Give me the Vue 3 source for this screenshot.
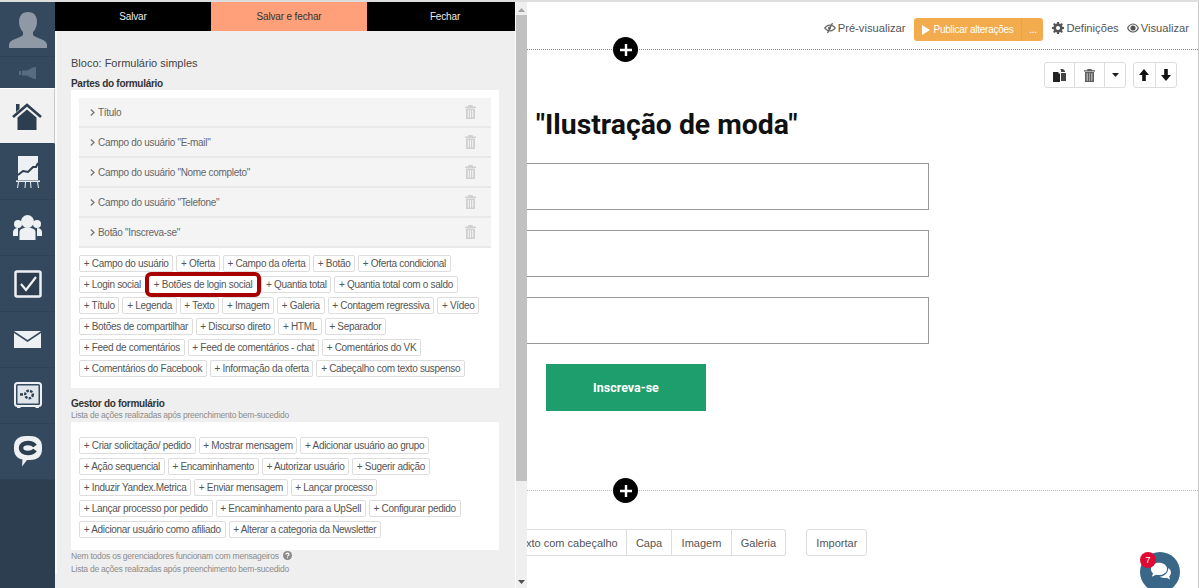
<script setup>
const navItems = ['home','chart','people','check','mail','safe','chat']
const parts = ['Título','Campo do usuário "E-mail"','Campo do usuário "Nome completo"','Campo do usuário "Telefone"','Botão "Inscreva-se"']
const partButtons = [
  ['Campo do usuário','Oferta','Campo da oferta','Botão','Oferta condicional'],
  ['Login social','Botões de login social','Quantia total','Quantia total com o saldo'],
  ['Título','Legenda','Texto','Imagem','Galeria','Contagem regressiva','Vídeo'],
  ['Botões de compartilhar','Discurso direto','HTML','Separador'],
  ['Feed de comentários','Feed de comentários - chat','Comentários do VK'],
  ['Comentários do Facebook','Informação da oferta','Cabeçalho com texto suspenso']
]
const managerButtons = [
  ['Criar solicitação/ pedido','Mostrar mensagem','Adicionar usuário ao grupo'],
  ['Ação sequencial','Encaminhamento','Autorizar usuário','Sugerir adição'],
  ['Induzir Yandex.Metrica','Enviar mensagem','Lançar processo'],
  ['Lançar processo por pedido','Encaminhamento para a UpSell','Configurar pedido'],
  ['Adicionar usuário como afiliado','Alterar a categoria da Newsletter']
]
</script>

<template>
  <div class="page">
    <aside class="sidebar">
      <div class="avatar">
        <svg width="38" height="36" viewBox="0 0 38 36"><path fill="#8f99a5" d="M19 0c6 0 9 4 9 10 0 4-2 8-4 10v3c2 3 14 4 14 10v3H0v-3c0-6 12-7 14-10v-3c-2-2-4-6-4-10C10 4 13 0 19 0z"/></svg>
      </div>
      <div class="speaker">
        <svg width="18" height="12" viewBox="0 0 18 12"><path fill="#566c82" d="M0 4h2v4H0zM3 3.500h5L15 0h2v12h-2L8 8.500H3z"/></svg>
      </div>
      <div v-for="item in navItems" :key="item" class="nav-item" :class="{ active: item === 'home' }">
        <svg v-if="item === 'home'" width="30" height="27" viewBox="0 0 30 27"><path fill="none" stroke="#2c3e50" stroke-width="2.600" d="M1 14 15 2l14 12"/><path fill="#2c3e50" d="M4 1h3.500v5L4 9zM15 6.500l9.500 8V27h-19V14.500z"/></svg>
        <svg v-else-if="item === 'chart'" width="24" height="32" viewBox="0 0 24 32"><path fill="#eef1f3" d="M2 0h20v24H2z"/><path fill="#eef1f3" d="M0 24.500h24V26h-2l1 6h-1l-1-6H15l.5 6h-1L14 26H10l-.5 6h-1L9 26H3l-1 6H1l1-6H0z"/><path fill="none" stroke="#2c3e50" stroke-width="2" d="M2 19l5-4 5 1 5-5 3 0 2-4"/></svg>
        <svg v-else-if="item === 'people'" width="29" height="25" viewBox="0 0 29 25"><g fill="#eef1f3"><circle cx="14.500" cy="6.500" r="6.500"/><circle cx="5" cy="9" r="4"/><circle cx="24" cy="9" r="4"/><path d="M6.500 25v-8c0-3 4-4.500 8-4.500s8 1.500 8 4.500v8z"/><path d="M0 21v-4c0-2 2-4 5-4v8zM29 21v-4c0-2-2-4-5-4v8z"/></g></svg>
        <svg v-else-if="item === 'check'" width="28" height="28" viewBox="0 0 28 28"><rect x="1.500" y="1.500" width="25" height="25" rx="1.500" fill="#2c3e50" stroke="#eef1f3" stroke-width="2.500"/><path fill="none" stroke="#eef1f3" stroke-width="2.200" d="M7 14l5 6L22 7"/></svg>
        <svg v-else-if="item === 'mail'" width="27" height="17" viewBox="0 0 27 17"><path fill="#eef1f3" d="M0 0h27L13.500 9zM0 2l13.500 9L27 2v15H0z"/></svg>
        <svg v-else-if="item === 'safe'" width="28" height="27" viewBox="0 0 28 27"><rect x="1" y="1" width="26" height="23" rx="2.500" fill="#34495e" stroke="#eef1f3" stroke-width="2"/><rect x="3.500" y="3.500" width="21" height="18" fill="#dfe5ea"/><circle cx="15" cy="12.500" r="3.800" fill="none" stroke="#2c3e50" stroke-width="2.400" stroke-dasharray="2.500 1.200"/><path fill="#2c3e50" d="M6 11.200h3v2.500H6z"/><path fill="#eef1f3" d="M3 24h3.500v2H3zM21.500 24H25v2h-3.500z"/></svg>
        <svg v-else width="28" height="31" viewBox="0 0 28 31"><path fill="#eef1f3" d="M12 0h4c8 0 12 4 12 11v2c0 7-4 11-12 11h-3l-5 6.500L8.500 23.500C3 22.500 0 18.500 0 13v-2C0 4 4 0 12 0z"/><path fill="none" stroke="#2c3e50" stroke-width="4.500" d="M21 10c-1.500-2-4-3-7-3-4 0-7 2-7 5s3 5 7 5c3 0 5.500-1 7-3"/></svg>
      </div>
    </aside>

    <section class="panel">
      <div class="panel-body">
        <div class="tabs">
          <div class="tab">Salvar</div>
          <div class="tab tab-main">Salvar e fechar</div>
          <div class="tab tab-close">Fechar</div>
        </div>
        <div class="panel-content">
          <div class="block-title">Bloco: Formulário simples</div>
          <div class="section-title">Partes do formulário</div>
          <div class="white-box parts-box">
            <div v-for="p in parts" :key="p" class="part-row">
              <span class="chev">
                <svg width="5" height="7" viewBox="0 0 5 7"><path fill="none" stroke="#777" stroke-width="1.300" d="M.8.500 4 3.500.8 6.500"/></svg>
              </span>
              <span class="part-name">{{ p }}</span>
              <svg class="part-trash" width="11" height="14" viewBox="0 0 11 14"><path fill="#d0d0d0" d="M3.500 0h4l.5 1.500h3V3H0V1.500h3zM1 3.500h9V14H1zM2.800 5v7.500h1V5zm2.200 0v7.500h1V5zm2.200 0v7.500h1V5z" fill-rule="evenodd"/></svg>
            </div>
            <div class="tag-rows">
              <div v-for="(row, i) in partButtons" :key="i" class="tag-row">
                <span v-for="b in row" :key="b" class="tag" :class="{ marked: b === 'Botões de login social' }">+ {{ b }}</span>
              </div>
            </div>
          </div>
          <div class="section-title manager-title">Gestor do formulário</div>
          <div class="hint hint-top">Lista de ações realizadas após preenchimento bem-sucedido</div>
          <div class="white-box manager-box">
            <div class="tag-rows">
              <div v-for="(row, i) in managerButtons" :key="i" class="tag-row">
                <span v-for="b in row" :key="b" class="tag">+ {{ b }}</span>
              </div>
            </div>
          </div>
          <div class="hint note">Nem todos os gerenciadores funcionam com mensageiros
            <svg width="9" height="9" viewBox="0 0 9 9"><circle cx="4.500" cy="4.500" r="4.500" fill="#8a8a8a"/><path fill="none" stroke="#fff" stroke-width="1.200" d="M3 3.500c0-1.800 3-1.800 3 0 0 1-1.500 1-1.500 2"/><path fill="#fff" d="M4 6.300h1v1H4z"/></svg>
          </div>
          <div class="hint note2">Lista de ações realizadas após preenchimento bem-sucedido</div>
        </div>
      </div>
      <div class="scrollbar">
        <svg class="arrow-up" width="7" height="4" viewBox="0 0 7 4"><path fill="#a3a3a3" d="M3.500 0 7 4H0z"/></svg>
        <div class="thumb"></div>
        <svg class="arrow-down" width="7" height="4" viewBox="0 0 7 4"><path fill="#505050" d="M0 0h7L3.500 4z"/></svg>
      </div>
    </section>

    <main class="canvas">
      <div class="topbar">
        <span class="top-link">
          <svg width="12" height="10" viewBox="0 0 12 10"><path fill="#666" d="M6 1.500C9 1.500 11 3.500 12 5c-1 1.500-3 3.500-6 3.500S1 6.500 0 5c1-1.500 3-3.500 6-3.500zm0 1.200C4 2.700 2.500 3.800 1.500 5 2.500 6.200 4 7.300 6 7.300S9.500 6.200 10.500 5C9.500 3.800 8 2.700 6 2.700z" fill-rule="evenodd"/><path stroke="#666" stroke-width="1.300" d="M8.500 0 3.500 10"/><circle cx="5.500" cy="5" r="1.500" fill="#666"/></svg>
          Pré-visualizar
        </span>
        <div class="publish">
          <span class="publish-main">
            <svg width="8" height="10" viewBox="0 0 8 10"><path fill="#fff" d="M0 0l8 5-8 5z"/></svg>
            Publicar alterações
          </span>
          <span class="publish-more">...</span>
        </div>
        <span class="top-link">
          <svg width="12" height="12" viewBox="0 0 12 12"><path fill="#555" fill-rule="evenodd" d="M5 0h2l.3 1.700 1 .4L9.800 1.100l1.100 1.100-1 1.500.4 1L12 5v2l-1.700.3-.4 1 1 1.500-1.100 1.100-1.500-1-1 .4L7 12H5l-.3-1.700-1-.4-1.500 1-1.100-1.100 1-1.500-.4-1L0 7V5l1.700-.3.400-1-1-1.500 1.100-1.100 1.500 1 1-.4zM6 4a2 2 0 1 0 0 4 2 2 0 0 0 0-4z"/></svg>
          Definições
        </span>
        <span class="top-link">
          <svg width="12" height="10" viewBox="0 0 13 10"><path fill="#555" fill-rule="evenodd" d="M6.500 0C9.800 0 12 2.500 13 5c-1 2.500-3.200 5-6.500 5S1 7.500 0 5c1-2.500 3.200-5 6.500-5zm0 1.200C4 1.200 2.300 3 1.400 5c.9 2 2.600 3.800 5.100 3.800S10.700 7 11.600 5C10.700 3 9 1.200 6.500 1.200zm0 1a2.800 2.800 0 1 1 0 5.600 2.800 2.800 0 0 1 0-5.600z"/></svg>
          Visualizar
        </span>
      </div>
      <div class="divider">
        <span class="plus"><svg width="12" height="12" viewBox="0 0 12 12"><path stroke="#fff" stroke-width="2.400" d="M6 0v12M0 6h12"/></svg></span>
      </div>
      <div class="block-tools">
        <div class="btn-group">
          <span class="tool tool-wide">
            <svg width="13" height="13" viewBox="0 0 13 13"><path fill="#222" d="M0 3h6l1 1v9H0z"/><path fill="#444" d="M7 0h3l2 2v1H8V1zM8 4h5v8H8z"/><path fill="#fff" d="M5.500 2.500h1.500v2H5.500z"/></svg>
          </span>
          <span class="tool tool-wide">
            <svg width="11" height="13" viewBox="0 0 11 13"><path fill="#5f5f5f" fill-rule="evenodd" d="M3.500 0h4L8 1.200h3v1.300H0V1.200h3zM1 3h9v10H1zM2.800 4.500v7h1v-7zm2.200 0v7h1v-7zm2.200 0v7h1v-7z"/><path fill="#a89a9a" d="M2.800 4.500h1v7h-1zM5 4.500h1v7H5zM7.200 4.500h1v7h-1z"/></svg>
          </span>
          <span class="tool tool-caret"><svg width="7" height="4" viewBox="0 0 7 4"><path fill="#222" d="M0 0h7L3.500 4z"/></svg></span>
        </div>
        <div class="btn-group">
          <span class="tool tool-arrow"><svg width="10" height="12" viewBox="0 0 10 12"><path fill="#111" d="M5 0l5 6H6.800v6H3.200V6H0z"/></svg></span>
          <span class="tool tool-arrow"><svg width="10" height="12" viewBox="0 0 10 12"><path fill="#111" d="M3.200 0h3.600v6H10l-5 6-5-6h3.200z"/></svg></span>
        </div>
      </div>
      <h1 class="headline">"Ilustração de moda"</h1>
      <div class="fields">
        <div class="field"></div>
        <div class="field"></div>
        <div class="field"></div>
      </div>
      <div class="submit">Inscreva-se</div>
      <div class="divider divider-bottom">
        <span class="plus"><svg width="12" height="12" viewBox="0 0 12 12"><path stroke="#fff" stroke-width="2.400" d="M6 0v12M0 6h12"/></svg></span>
      </div>
      <div class="add-row">
        <div class="add-group">
          <span class="add-btn add-first">xto com cabeçalho</span>
          <span class="add-btn">Capa</span>
          <span class="add-btn">Imagem</span>
          <span class="add-btn">Galeria</span>
        </div>
        <span class="import">Importar</span>
      </div>
      <div class="chat-bubble">
        <svg width="23" height="20" viewBox="0 0 26 23"><path fill="#fff" d="M11 1c5.500 0 9.500 3 9.500 7s-4 7-9.500 7c-1 0-2 0-3-.3L3 17l1.500-4C3 11.700 2 10 2 8c0-4 4-7 9-7z"/><path fill="#fff" d="M22 7c2 1.500 3 3 3 5 0 2-1 3.500-2 4.500l1 3.500-4-2c-3 1-6 0-8-1 5 0 10-4 10-10z"/></svg>
        <span class="badge">7</span>
      </div>
    </main>
  </div>
</template>

<style>
html, body { margin: 0; padding: 0; background: #fff; overflow: hidden; }
</style>

<style scoped>
.page {
  width: 1199px;
  height: 588px;
  box-sizing: border-box;
  border-top: 2px solid #dedede;
  display: flex;
  overflow: hidden;
  position: relative;
  font-family: "Liberation Sans", Arial, sans-serif;
  background: #fff;
}
.sidebar {
  width: 55px;
  flex: none;
  background: #2c3e50;
  display: flex;
  flex-direction: column;
}
.avatar {
  height: 55px;
  background: #34495e;
  border-bottom: 1px solid #2f4256;
  box-sizing: border-box;
  display: flex;
  align-items: flex-end;
  justify-content: center;
  padding-bottom: 8px;
}
.speaker {
  height: 31px;
  background: #34495e;
  display: flex;
  align-items: center;
  justify-content: center;
}
.nav-item {
  height: 56px;
  flex: none;
  box-sizing: border-box;
  background: #34495e;
  border-bottom: 1px solid #2f4256;
  display: flex;
  align-items: center;
  justify-content: center;
}
.nav-item.active {
  background: #f1f1f1;
  border-top: 1px solid #fff;
  border-right: 1px solid #c8c8c8;
}
.panel {
  width: 472px;
  flex: none;
  display: flex;
  background: #efefef;
  position: relative;
  z-index: 1;
}
.panel-body {
  width: 460px;
  flex: none;
}
.tabs {
  display: flex;
  height: 29px;
  background: #000;
}
.tab {
  flex: 1 0 0;
  display: flex;
  align-items: center;
  justify-content: center;
  font-size: 10px;
  letter-spacing: -.15px;
  color: #ececec;
}
.tab-main { background: #ffa07a; color: #333; flex: 1 0 0; }
.tab-close { flex: 0 0 148px; padding-left: 8px; box-sizing: border-box; }
.panel-content {
  border-left: 2px solid #fafafa;
  padding: 27px 16px 0 14px;
}
.block-title {
  font-size: 11px;
  line-height: 11px;
  color: #444;
}
.section-title {
  font-size: 10px;
  letter-spacing: -.3px;
  line-height: 12px;
  font-weight: 700;
  color: #333;
  margin-top: 9px;
}
.white-box {
  background: #fff;
  padding: 8px;
}
.parts-box {
  height: 298px;
  box-sizing: border-box;
}
.part-row {
  height: 30px;
  box-sizing: border-box;
  background: #f4f4f4;
  border-bottom: 2px solid #e9e9e9;
  display: flex;
  align-items: center;
  padding: 0 15px 0 11px;
  font-size: 10px;
  letter-spacing: -.3px;
  color: #666;
}
.chev { display: inline-flex; margin-right: 3px; }
.part-name { flex: 1; }
.tag-rows {
  display: flex;
  flex-direction: column;
  gap: 4px;
}
.parts-box .tag-rows { margin-top: 7px; }
.tag-row {
  display: flex;
  gap: 3px;
}
.tag {
  height: 17px;
  box-sizing: border-box;
  border: 1px solid #ddd;
  border-radius: 2px;
  background: #fff;
  display: inline-flex;
  align-items: center;
  padding: 0 3.700px;
  font-size: 10px;
  letter-spacing: -.3px;
  color: #555;
  white-space: nowrap;
}
.tag.marked {
  outline: 4px solid #a80000;
  outline-offset: 0;
  border-color: #fff;
  margin: 0 1px 0 .5px;
}
.manager-title { margin-top: 10px; }
.hint {
  font-size: 8.500px;
  letter-spacing: -.23px;
  color: #8c8c8c;
  line-height: 10px;
}
.manager-box {
  margin-top: 2px;
  height: 128px;
  box-sizing: border-box;
  padding-top: 15px;
}
.note { margin-top: 1px; }
.note svg { vertical-align: -1px; margin-left: 2px; }
.note2 { margin-top: 3px; }
.scrollbar {
  width: 12px;
  flex: none;
  position: relative;
  box-sizing: border-box;
  border-left: 1px solid #fafafa;
  display: flex;
  flex-direction: column;
  align-items: center;
}
.arrow-up { margin-top: 6px; }
.thumb {
  margin-top: 3px;
  width: 100%;
  height: 466px;
  background: #c1c1c1;
}
.arrow-down { margin-top: auto; margin-bottom: 4px; }
.canvas {
  flex: 1;
  min-width: 0;
  display: flex;
  flex-direction: column;
  position: relative;
  border-right: 1px solid #c8c8c8;
  overflow: hidden;
}
.topbar {
  height: 47px;
  box-sizing: border-box;
  padding: 16px 9px 0 0;
  display: flex;
  justify-content: flex-end;
  align-items: flex-start;
  gap: 8px;
}
.top-link {
  font-size: 11.200px;
  line-height: 20px;
  color: #555;
  display: inline-flex;
  align-items: center;
  gap: 2px;
}
.publish {
  width: 129px;
  height: 23px;
  display: flex;
  background: #f2ac4d;
  border-radius: 3px;
  color: #fff;
  font-size: 10px;
  letter-spacing: -.26px;
  align-items: center;
  margin: 0 1px;
}
.publish-main {
  flex: 1;
  display: flex;
  align-items: center;
  gap: 3px;
  padding-left: 8px;
  height: 100%;
  border-right: 1px solid #eba247;
}
.publish-more { width: 21px; text-align: center; }
.divider {
  height: 1px;
  border-top: 1px dotted #888;
  position: relative;
}
.plus {
  position: absolute;
  left: 86px;
  top: -13px;
  width: 25px;
  height: 25px;
  border-radius: 50%;
  background: #000;
  display: flex;
  align-items: center;
  justify-content: center;
}
.block-tools {
  margin-top: 11px;
  display: flex;
  justify-content: flex-end;
  gap: 7px;
  padding-right: 21px;
  height: 26px;
}
.btn-group {
  display: flex;
  border: 1px solid #ddd;
  border-radius: 3px;
}
.tool {
  display: flex;
  align-items: center;
  justify-content: center;
  border-left: 1px solid #ddd;
}
.tool:first-child { border-left: 0; }
.tool-wide { width: 29px; }
.tool-caret { width: 20px; }
.tool-arrow { width: 20.500px; }
.headline {
  margin: 19px 0 0 9px;
  font-family: Roboto, "Liberation Sans", sans-serif;
  font-size: 28.350px;
  line-height: 36px;
  font-weight: 700;
  color: #111;
  white-space: nowrap;
}
.fields {
  margin-top: 20px;
  display: flex;
  flex-direction: column;
  gap: 20px;
}
.field {
  width: 402px;
  height: 47px;
  box-sizing: border-box;
  border: 1px solid #999;
  border-left: 0;
}
.submit {
  margin: 20px 0 0 19px;
  width: 160px;
  height: 47px;
  background: #1f9e6d;
  color: #fff;
  font-family: Roboto, "Liberation Sans", sans-serif;
  font-weight: 700;
  font-size: 12.500px;
  display: flex;
  align-items: center;
  justify-content: center;
}
.divider-bottom { margin-top: 79px; border-top-color: #b5b5b5; }
.add-row {
  margin-top: 37px;
  display: flex;
  align-items: stretch;
  gap: 20px;
  height: 27px;
}
.add-group {
  display: flex;
  border: 1px solid #ddd;
  border-left: 0;
  border-radius: 0 3px 3px 0;
  box-sizing: border-box;
  margin-left: -1px;
}
.add-btn, .import {
  font-size: 11px;
  color: #555;
  display: flex;
  align-items: center;
  white-space: nowrap;
}
.add-btn { padding: 0 9.200px; border-left: 1px solid #ddd; }
.add-first { border-left: 0; padding: 0 8px 0 0; }
.import {
  border: 1px solid #ddd;
  border-radius: 3px;
  padding: 0 9px;
}
.chat-bubble {
  position: absolute;
  left: 613px;
  top: 550px;
  width: 40px;
  height: 40px;
  border-radius: 50%;
  background: #3a6788;
  display: flex;
  align-items: center;
  justify-content: center;
}
.badge {
  position: absolute;
  left: 0;
  top: 0;
  width: 16px;
  height: 16px;
  border-radius: 50%;
  background: #dd0b33;
  color: #fff;
  font-size: 9px;
  display: flex;
  align-items: center;
  justify-content: center;
}
</style>
